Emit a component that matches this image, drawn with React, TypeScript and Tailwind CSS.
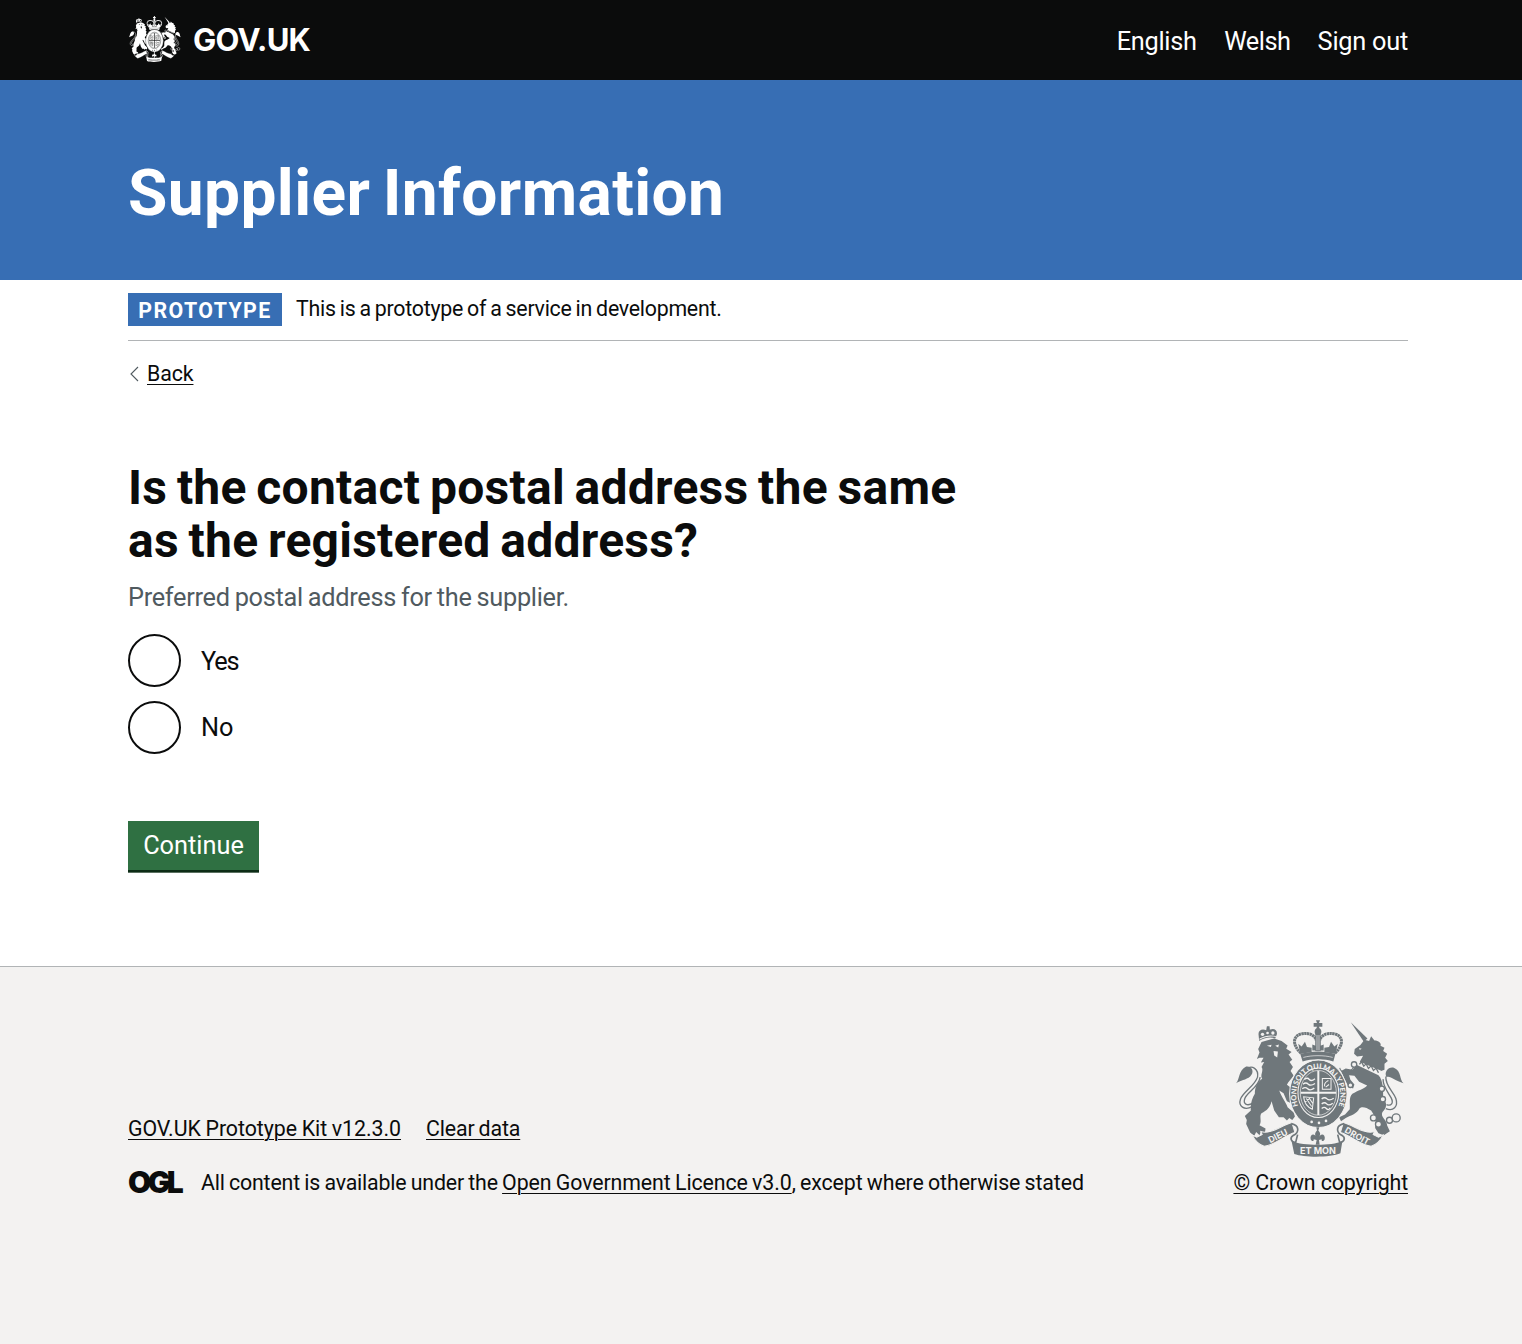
import type { ReactNode } from 'react';

type CrestProps = { className: string; ink: string; paper: string; small?: boolean };

function Crest({ className, ink, paper, small }: CrestProps) {
  const ribbon = (
    <>
      <path fill={ink} stroke={paper} strokeWidth="3" d="M84 373 L98 380 L114 372 L110 363 C140 372 170 345 203 336 L212 366 C182 374 152 404 120 407 C106 402 94 394 84 373Z" />
      <path fill="none" stroke={ink} strokeWidth="5" d="M201 339 C226 344 226 366 206 375 C196 382 200 394 214 396 L220 372" />
    </>
  );
  return (
    <svg className={className} viewBox="36 29 502 410" preserveAspectRatio={small ? 'none' : undefined} aria-hidden="true">
      {/* lion */}
      <g fill={ink}>
        <path d="M112 95 L150 84 L172 92 L190 105 L186 115 L202 125 L193 132 L204 148 L196 155 L206 170 L199 182 L208 195 C200 207 192 213 188 223 L200 232 L208 262 L214 270 L204 280 L188 272 L178 248 L165 240 C172 260 185 275 190 290 L208 306 L212 318 L204 328 L195 322 L188 330 L178 320 L164 320 L150 300 L142 272 C138 290 128 300 112 308 C104 318 114 332 106 344 L124 354 L122 368 L110 362 L106 374 L96 364 L90 376 L78 366 L66 340 L68 328 L62 316 L80 300 C78 282 84 262 92 250 C92 230 100 215 114 205 C106 195 120 180 112 170 L120 155 L110 156 L118 142 L106 142 L98 146 L106 126 L102 116Z" />
        <path d="M105 92 L103 72 C102 60 114 54 126 60 L128 48 L136 48 L137 58 C150 52 160 60 158 72 L153 84 C138 78 118 82 105 92Z" />
      </g>
      <g fill={paper}>
        <path d="M128 106 L142 103 L140 110Z M153 106 L164 102 L162 111Z" />
        <path d="M148 122 L161 123 L159 141 L150 135Z" />
        <circle cx="115" cy="72" r="5" />
        <circle cx="130" cy="68" r="4" />
        <circle cx="146" cy="68" r="5" />
        <path d="M106 84 C122 75 140 73 155 77 L155 80 C140 77 122 79 106 88Z" />
      </g>
      <path fill="none" stroke={ink} strokeWidth="4" d="M84 288 C60 302 42 286 49 266 C57 244 92 226 100 200 C104 176 84 162 66 176" />
      <path fill="none" stroke={ink} strokeWidth="4" d="M86 278 C68 288 56 280 62 264 C70 244 104 230 108 200" />
      <path fill={ink} d="M36 218 C48 205 42 180 66 168 C84 166 92 184 78 198 C66 208 48 210 36 218Z" />

      {/* unicorn */}
      <g fill={ink}>
        <path d="M379 36 L429 84 L418 94Z" />
        <path d="M420 88 L434 92 L440 78 L450 90 C462 90 472 98 468 106 L480 112 L476 122 L488 130 L482 142 L490 152 L480 160 L480 178 L464 184 L406 154 L416 136 L398 138 L389 130 L391 116 L408 104Z" />
        <path d="M396 163 L462 194 C478 210 476 250 476 262 C490 280 486 294 474 304 C466 320 488 326 488 345 L496 362 L478 374 L462 368 L452 352 L454 322 L440 300 C425 290 412 287 405 294 C398 310 380 314 364 322 L350 332 L344 320 L362 312 L376 296 C378 280 372 262 384 250 C400 240 420 235 428 225 L404 214 L390 196 L374 194 L378 208 L390 222 L386 234 L372 228 L360 205 L350 182 L364 174 L384 178Z" />
        <path d="M537 218 C524 208 532 182 508 172 C492 168 478 184 486 200 C496 194 510 210 537 218Z" />
      </g>
      <path fill="none" stroke={ink} strokeWidth="4" d="M484 294 C506 304 522 288 514 264 C506 242 482 226 484 198 M486 282 C500 288 508 278 500 262 C490 244 474 226 476 206" />
      <path fill={paper} d="M404 153 L470 181 L466 190 L400 162Z M404 113 L412 115 L406 119Z" />
      <path fill="none" stroke={ink} strokeWidth="4" d="M405 162 L411 154 L418 167 L425 160 L432 174 L440 166 L447 180 L455 173 L462 187" />
      <path fill="none" stroke={ink} strokeWidth="3" d="M388 170 C376 190 350 190 346 172" />
      <g fill={paper} stroke={ink} strokeWidth="4">
        <circle cx="389" cy="162" r="8" />
        <circle cx="378" cy="224" r="7" />
        <circle cx="472" cy="235" r="8" />
        <circle cx="475" cy="266" r="8" />
        <circle cx="447" cy="322" r="9" />
        <circle cx="462" cy="341" r="9" />
        <circle cx="495" cy="329" r="9" />
        <circle cx="515" cy="322" r="12" />
      </g>

      {/* crown */}
      <g fill={ink}>
        <path d="M275 30 H287 L284 38 H294 V49 H284 L287 58 H275 L278 49 H268 V38 H278Z" />
        <circle cx="281" cy="64" r="10" />
        <path d="M228 131 C260 121 302 121 333 131 L327 153 C300 144 262 144 235 153Z" />
        <path d="M273 70 H289 V122 H273Z" />
        <path d="M222 100 L232 108 L242 94 L248 110 L262 112 L262 125 L228 131Z M340 100 L330 108 L320 94 L314 110 L300 112 L300 125 L334 131Z" />
        <path d="M264 102 L274 106 V92 H288 V106 L298 102 V120 H264Z" />
      </g>
      <g fill="none" stroke={ink} strokeWidth="9" strokeDasharray="7 1.2">
        <path d="M230 128 C200 100 208 74 234 70 C256 66 272 76 276 90" />
        <path d="M332 128 C362 100 354 74 328 70 C306 66 290 76 286 90" />
      </g>
      <path stroke={paper} strokeWidth="2" fill="none" d="M237 141 C262 134 300 134 325 141 M278 74 V120 M284 74 V120" />

      {/* garter and quartered shield */}
      <ellipse cx="282" cy="250" rx="86" ry="101" fill={ink} stroke={paper} strokeWidth="3" />
      <ellipse cx="282" cy="247" rx="61" ry="74" fill="none" stroke={paper} strokeWidth="3" />
      <ellipse cx="282" cy="247" rx="54" ry="67" fill="none" stroke={paper} strokeWidth="2" />
      {!small && (
        <>
          <path id="garter" fill="none" d="M240 315 A66 79 0 1 1 324 315" />
          <text fill={paper} fontFamily="Lato" fontWeight="900" fontSize="22" wordSpacing="-2">
            <textPath href="#garter" startOffset="50%" textAnchor="middle">HONI SOIT QUI MAL Y PENSE</textPath>
          </text>
        </>
      )}
      <g stroke={paper} fill="none">
        <path strokeWidth="6" d="M282 181 V313 M229 247 H335" />
        <path strokeWidth="4" d="M240 207 q9 -7 15 0 t17 -2 M236 221 q9 -7 16 0 t20 -2 M234 235 q9 -7 16 0 t20 -2" />
        <path strokeWidth="4" d="M292 294 q8 -7 14 0 t12 -2 M292 280 q9 -7 15 0 t18 -2 M292 265 q9 -7 16 0 t20 -2" />
        <path strokeWidth="3" d="M294 204 H320 V236 H294Z M301 228 C298 216 306 214 312 210 M304 230 L314 222" />
        <path strokeWidth="3" d="M238 259 C240 280 250 290 264 296 L268 262Z M246 264 L262 288 M254 262 L265 278 M243 274 L254 266" />
      </g>
      <g fill={paper}>
        <circle cx="262" cy="334" r="4" />
        <circle cx="284" cy="337" r="4" />
        <circle cx="305" cy="331" r="4" />
      </g>

      {/* motto ribbon */}
      {ribbon}
      <g transform="translate(560 0) scale(-1 1)">{ribbon}</g>
      <path fill={ink} d="M202 392 C240 406 320 406 354 392 L348 428 C320 441 240 441 210 430Z" />
      <path fill={ink} d="M276 350 H285 L282 360 C292 370 286 376 284 380 C290 366 304 372 301 386 C298 394 290 392 292 386 L284 388 L286 402 H274 L277 388 L268 386 C270 392 262 394 259 386 C256 372 270 366 276 380 C272 374 270 368 278 360Z" />
      {small ? (
        <path fill="none" stroke={paper} strokeWidth="12" strokeDasharray="4 5" d="M226 418 C260 424 300 424 334 418" />
      ) : (
        <g fill={paper} fontFamily="Inter" fontWeight="700" textAnchor="middle">
          <text x="281" y="431" fontSize="27">ET MON</text>
          <text transform="translate(165 384) rotate(-27)" fontSize="26">DIEU</text>
          <text transform="translate(394 384) rotate(29)" fontSize="26">DROIT</text>
        </g>
      )}
    </svg>
  );
}

function Container({ className = '', children }: { className?: string; children: ReactNode }) {
  return <div className={`ml-32 w-[1280px] ${className}`}>{children}</div>;
}

function Radio({ label, className }: { label: string; className: string }) {
  return (
    <label className="flex h-[53px] items-center gap-5 text-[25.333px] leading-[33.33px]">
      <input type="radio" name="same-address" className="size-[53px] appearance-none rounded-full border-[2.5px] border-[#0b0c0c]" />
      <span className={className}>{label}</span>
    </label>
  );
}

const link = 'underline decoration-1 underline-offset-[3px] [text-decoration-skip-ink:auto]';

export default function App() {
  return (
    <div className="flex min-h-[1344px] flex-col bg-white font-[Roboto,sans-serif] text-[#0b0c0c]">
      <header className="h-20 bg-[#0b0c0c] text-white">
        <Container className="flex h-20 items-center justify-between">
          <a href="#" className="flex items-center">
            <Crest className="-mt-[3px] ml-px h-[46px] w-[52px]" ink="#ffffff" paper="#0b0c0c" small />
            <span className="ml-3 font-[Inter] text-[31px] leading-8 font-bold tracking-[-0.7px]">GOV.UK</span>
          </a>
          <nav className="flex pt-[3px] text-[25.333px] leading-[33.33px]">
            <a href="#" className="mr-[27.5px] tracking-[-0.28px]">English</a>
            <a href="#" className="mr-[27px] tracking-[-0.45px]">Welsh</a>
            <a href="#" className="tracking-[-0.25px]">Sign out</a>
          </nav>
        </Container>
      </header>

      <div className="h-[200px] bg-[#376eb4] pt-[82px] text-white">
        <Container className="text-[64px] leading-[64px] font-bold tracking-[0.4px] [word-spacing:-4px]">Supplier Information</Container>
      </div>

      <Container className="h-[686px]">
        <div className="flex h-[61px] items-start border-b border-[#b1b4b6] pt-[13px]">
          <strong className="flex h-[33px] w-[154px] items-center justify-center bg-[#376eb4] pt-1 text-[21.333px] leading-[26.67px] font-bold tracking-[1.4px] text-white">PROTOTYPE</strong>
          <span className="ml-3.5 pt-[3px] text-[21.333px] leading-[26.67px] tracking-[-0.25px] [word-spacing:-1px]">This is a prototype of a service in development.</span>
        </div>
        <a href="#" className="mt-5 flex items-center text-[21.333px] leading-[26.67px]">
          <svg className="mr-[7px] ml-[1px] h-4 w-[11px]" viewBox="0 0 11 16" fill="none" stroke="#505a5f" strokeWidth="1.1">
            <path d="M9 1 L2 8 L9 15" />
          </svg>
          <span className={`tracking-[-0.1px] ${link}`}>Back</span>
        </a>
        <h1 className="mt-[73px] text-[48px] leading-[53.33px] font-bold tracking-[0.25px] [word-spacing:-2.5px]">
          Is the contact postal address the same
          <br />
          as the registered address?
        </h1>
        <p className="mt-[14px] text-[25.333px] leading-[33.33px] tracking-[-0.3px] text-[#505a5f] [word-spacing:-1px]">Preferred postal address for the supplier.</p>
        <div className="mt-[19px] flex flex-col gap-3.5">
          <Radio label="Yes" className="mt-[3px] tracking-[-1.2px]" />
          <Radio label="No" className="mt-px" />
        </div>
        <button className="mt-[67px] flex h-[49px] w-[131px] items-start justify-center bg-[#2f7042] pt-2 text-[25.333px] leading-[33.33px] text-white shadow-[0_2.67px_0_#0c2c16]">Continue</button>
      </Container>

      <footer className="flex-1 border-t border-[#b1b4b6] bg-[#f3f2f1] text-[21.333px] leading-[26.67px]">
        <Container className="flex items-end justify-between pt-[53px]">
          <div className="-mb-px">
            <div className="flex gap-[25px]">
              <a href="#" className={`tracking-[-0.05px] [word-spacing:-0.5px] ${link}`}>GOV.UK Prototype Kit v12.3.0</a>
              <a href="#" className={`tracking-[-0.15px] [word-spacing:-1px] ${link}`}>Clear data</a>
            </div>
            <div className="mt-[27px] flex items-center">
              <span className="-mt-[3px] w-[55px] font-[Inter] text-[30px] leading-[26.67px] font-black tracking-[-3.6px]">OGL</span>
              <p className="ml-[18px] whitespace-nowrap">
                <span className="tracking-[-0.18px] [word-spacing:-0.8px]">All content is available under the </span>
                <a href="#" className={`tracking-[-0.1px] [word-spacing:-0.8px] ${link}`}>Open Government Licence v3.0</a>
                <span className="tracking-[-0.1px] [word-spacing:-0.9px]">, except where otherwise stated</span>
              </p>
            </div>
          </div>
          <a href="#" className="-mb-px flex flex-col items-end">
            <Crest className="mr-1 h-[137px] w-[168px]" ink="#6f777b" paper="#f3f2f1" />
            <span className={`mt-[13px] tracking-[-0.12px] ${link}`}>© Crown copyright</span>
          </a>
        </Container>
      </footer>
    </div>
  );
}
